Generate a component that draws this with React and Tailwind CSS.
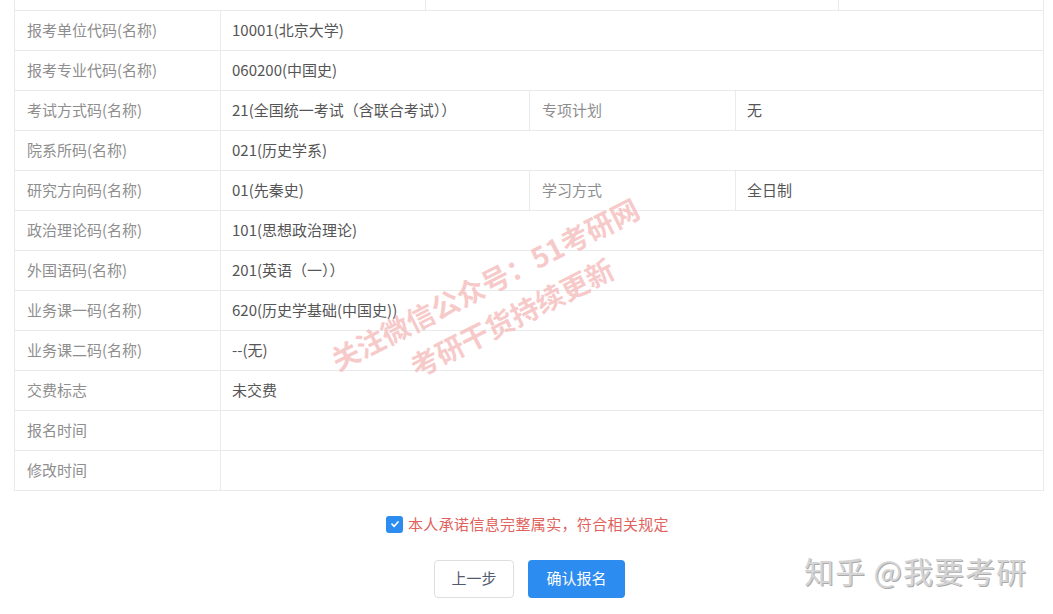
import React from 'react';

const rows = [
  ['报考单位代码(名称)', '10001(北京大学)'],
  ['报考专业代码(名称)', '060200(中国史)'],
  ['考试方式码(名称)', '21(全国统一考试（含联合考试））', '专项计划', '无'],
  ['院系所码(名称)', '021(历史学系)'],
  ['研究方向码(名称)', '01(先秦史)', '学习方式', '全日制'],
  ['政治理论码(名称)', '101(思想政治理论)'],
  ['外国语码(名称)', '201(英语（一））'],
  ['业务课一码(名称)', '620(历史学基础(中国史))'],
  ['业务课二码(名称)', '--(无)'],
  ['交费标志', '未交费'],
  ['报名时间', ''],
  ['修改时间', ''],
];

const font = { fontFamily: '"Microsoft YaHei", "Noto Sans CJK SC", "Noto Sans", sans-serif' };

const Row = ({ cells }) => {
  if (cells.length === 4) {
    return (
      <div className="grid grid-cols-[206px_309px_206px_309px] h-10 border-b border-[#e8eaec]">
        <div className="px-3 flex items-center text-[#8e8e8e] border-r border-[#e8eaec]">{cells[0]}</div>
        <div className="pl-[11px] flex items-center text-[#555] border-r border-[#e8eaec]">{cells[1]}</div>
        <div className="px-3 flex items-center text-[#8e8e8e] border-r border-[#e8eaec]">{cells[2]}</div>
        <div className="pl-[11px] flex items-center text-[#555]">{cells[3]}</div>
      </div>
    );
  }
  return (
    <div className="grid grid-cols-[206px_1fr] h-10 border-b border-[#e8eaec]">
      <div className="px-3 flex items-center text-[#8e8e8e] border-r border-[#e8eaec]">{cells[0]}</div>
      <div className="pl-[11px] flex items-center text-[#555]">{cells[1]}</div>
    </div>
  );
};

export default function App() {
  return (
    <div className="relative h-[614px] w-[1053px] overflow-hidden bg-white text-[15px]" style={font}>
      <div className="ml-[14px] w-[1030px] border-x border-[#e8eaec]">
        <div className="grid grid-cols-[411px_413px_1fr] h-[11px] border-b border-[#e8eaec]">
          <div className="border-r border-[#e8eaec]" />
          <div className="border-r border-[#e8eaec]" />
          <div />
        </div>
        {rows.map((r, i) => (
          <Row key={i} cells={r} />
        ))}
      </div>

      <div className="mt-[22px] flex items-center justify-center gap-[5px] pl-[2px]">
        <span className="flex h-[17px] w-[17px] items-center justify-center rounded-[3px] bg-[#2d8cf0]">
          <svg width="10" height="10" viewBox="0 0 10 10">
            <path d="M2 5.2 L4.2 7.3 L8 3" fill="none" stroke="white" strokeWidth="1.7" strokeLinecap="round" strokeLinejoin="round" />
          </svg>
        </span>
        <span className="tracking-[0.35px] text-[#e0625d]">本人承诺信息完整属实，符合相关规定</span>
      </div>

      <div className="mt-[24px] flex justify-center gap-[14px] pl-[6px]">
        <button className="h-[38px] w-[80px] rounded-[4px] border border-[#dcdee2] bg-white text-[#515a6e]">上一步</button>
        <button className="h-[38px] w-[97px] rounded-[4px] bg-[#2d8cf0] text-white">确认报名</button>
      </div>

      <div className="pointer-events-none absolute left-[494px] top-[302px] -translate-x-1/2 -translate-y-1/2 -rotate-[27deg] whitespace-nowrap text-center text-[28px] font-semibold leading-[42px] text-[#f5bcbc]/80">
        <div>关注微信公众号：51考研网</div>
        <div className="pl-[18px]">考研干货持续更新</div>
      </div>

      <div className="pointer-events-none absolute right-[26px] bottom-[21px] whitespace-nowrap text-[30px] tracking-[1px] text-[#d4d4d4] [text-shadow:1px_1px_0_#ababab]">
        知乎 @我要考研
      </div>
    </div>
  );
}
